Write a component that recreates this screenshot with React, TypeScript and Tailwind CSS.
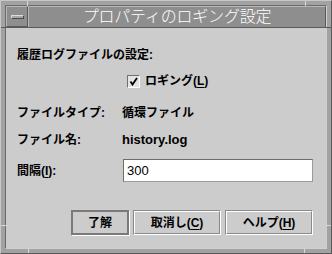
const font = { fontFamily: '"Liberation Sans", "Noto Sans CJK JP", sans-serif' };

function Mn({ c }: { c: string }) {
  return (
    <>
      (<span className="underline underline-offset-2">{c}</span>)
    </>
  );
}

export default function App() {
  return (
    <div style={font} className="relative w-[332px] h-[254px] bg-[#a2a2a2] border border-t-[#c8c8c8] border-l-[#c8c8c8] border-r-[#585858] border-b-[#585858] p-[4px]">
      {/* resize corner notches */}
      <div className="absolute top-0 left-[26px] w-px h-[5px] bg-[#d8d8d8]" />
      <div className="absolute top-0 left-[304px] w-px h-[5px] bg-[#d8d8d8]" />
      <div className="absolute bottom-0 left-[27px] w-px h-[5px] bg-[#d8d8d8]" />
      <div className="absolute bottom-0 left-[303px] w-px h-[5px] bg-[#d8d8d8]" />
      <div className="absolute left-0 top-[26px] h-px w-[5px] bg-[#5a5a5a]" />
      <div className="absolute right-0 top-[26px] h-px w-[5px] bg-[#5a5a5a]" />
      <div className="absolute left-0 top-[224px] h-px w-[5px] bg-[#d8d8d8]" />
      <div className="absolute right-0 top-[224px] h-px w-[5px] bg-[#d8d8d8]" />

      <div className="flex flex-col h-full border border-t-[#6a6a6a] border-l-[#6a6a6a] border-r-[#d0d0d0] border-b-[#d0d0d0]">
        {/* title bar */}
        <div className="flex h-[22px] border-b border-[#5a5a5a]">
          <div className="w-[22px] bg-[#8e8e8e] border border-t-[#b8b8b8] border-l-[#b8b8b8] border-r-[#5a5a5a] border-b-[#5a5a5a] flex items-center justify-center">
            <div className="w-[13px] h-[4px] bg-[#a8a8a8] border border-t-[#dcdcdc] border-l-[#dcdcdc] border-r-[#4a4a4a] border-b-[#4a4a4a]" />
          </div>
          <div className="flex-1 bg-[#8e8e8e] border border-t-[#b8b8b8] border-l-[#b8b8b8] border-r-[#5a5a5a] border-b-0 flex items-center justify-center">
            <span className="text-white text-[16px] font-light leading-none tracking-[-0.2px]">プロパティのロギング設定</span>
          </div>
        </div>

        {/* content */}
        <div className="flex-1 bg-[#cccccc] text-black text-[12px] font-bold leading-[14px] pl-[11px] pr-[13px] pt-[20px]">
          <div>履歴ログファイルの設定:</div>

          <div className="flex items-center mt-[12px] pl-[110px]">
            <div className="w-[13px] h-[13px] bg-[#e4e4e4] border border-t-[#707070] border-l-[#707070] border-r-white border-b-white flex items-center justify-center">
              <svg width="9" height="9" viewBox="0 0 9 9">
                <path d="M1.5 4.5 L3.5 7.5 L8 1" stroke="#000" strokeWidth="1.8" fill="none" />
              </svg>
            </div>
            <span className="ml-[5px]">ロギング<Mn c="L" /></span>
          </div>

          <div className="flex mt-[18px]">
            <div className="w-[105px]">ファイルタイプ:</div>
            <div>循環ファイル</div>
          </div>

          <div className="flex mt-[13px]">
            <div className="w-[105px]">ファイル名:</div>
            <div className="text-[13px]">history.log</div>
          </div>

          <div className="flex items-center mt-[12px]">
            <div className="w-[106px]">間隔<Mn c="I" />:</div>
            <div className="w-[190px] h-[23px] bg-white border border-t-[#6e6e6e] border-l-[#6e6e6e] border-r-[#9a9a9a] border-b-[#9a9a9a] flex items-center pl-[3px] text-[13px] font-normal">
              300
            </div>
          </div>

          <div className="flex justify-end gap-[4px] mt-[28px]">
            <div className="w-[58px] h-[25px] border-2 border-[#7a7a7a] shadow-[1px_1px_0_#ffffff] flex items-center justify-center">
              了解
            </div>
            <div className="w-[88px] h-[25px] border border-t-[#8a8a8a] border-l-[#8a8a8a] border-r-white border-b-white">
              <div className="h-full border border-t-white border-l-white border-r-[#8a8a8a] border-b-[#8a8a8a] flex items-center justify-center">
                取消し<Mn c="C" />
              </div>
            </div>
            <div className="w-[88px] h-[25px] border border-t-[#8a8a8a] border-l-[#8a8a8a] border-r-white border-b-white">
              <div className="h-full border border-t-white border-l-white border-r-[#8a8a8a] border-b-[#8a8a8a] flex items-center justify-center">
                ヘルプ<Mn c="H" />
              </div>
            </div>
          </div>
        </div>
      </div>
    </div>
  );
}
